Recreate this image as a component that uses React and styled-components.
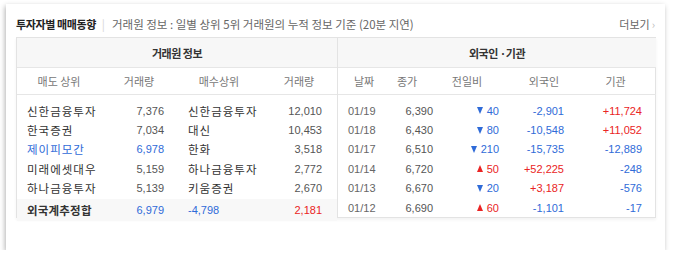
import styled, { createGlobalStyle } from "styled-components";

const GlobalStyle = createGlobalStyle`
  body {
    margin: 0;
    background: #fff;
    font-family: "Noto Sans CJK KR", "Noto Sans", sans-serif;
  }
`;

const BLUE = "#2f6bd8";
const RED = "#ea2424";
const NAME = "#333";

const Paper = styled.div`
  width: 659px;
  height: 246px;
  margin: 4px 0 0 6px;
  box-sizing: border-box;
  padding: 10px 9px 0 10px;
  background: #fff;
  box-shadow: -1px 2px 5px rgba(0, 0, 0, 0.3);
`;

const TitleBar = styled.div`
  display: flex;
  align-items: center;
  height: 20px;
  margin-bottom: 3px;
  font-size: 11.5px;
  color: #666;
`;

const Title = styled.span`
  font-weight: bold;
  color: #222;
  font-size: 11px;
  letter-spacing: -0.4px;
`;

const Sep = styled.span`
  color: #d5d5d5;
  margin: 0 7px 0 6px;
`;

const More = styled.span`
  margin-left: auto;
  margin-right: 1px;
  font-size: 11px;
  color: #666;
  &::after {
    content: "›";
    color: #bbb;
    margin-left: 2px;
  }
`;

const Table = styled.div`
  display: flex;
  border: 1px solid #e3e3e3;
  box-shadow: 0 2px 3px rgba(0, 0, 0, 0.05);
`;

const Half = styled.div`
  width: ${(p) => p.$w}px;
  border-left: ${(p) => (p.$divider ? "1px solid #e3e3e3" : "none")};
  display: grid;
  grid-template-columns: ${(p) => p.$cols};
  grid-template-rows: 30px 33px;
  grid-auto-rows: 19.4px;
  align-content: start;
  font-size: 11px;
`;

const GroupHead = styled.div`
  grid-column: 1 / -1;
  display: flex;
  align-items: center;
  justify-content: center;
  background: #f7f7f7;
  border-bottom: 1px solid #e6e6e6;
  font-weight: 600;
  color: #333;
  letter-spacing: -0.5px;
`;

const ColHead = styled.div`
  align-self: start;
  height: 26px;
  display: flex;
  align-items: center;
  justify-content: center;
  padding: 0 ${(p) => p.$pr || 0}px 0 ${(p) => p.$pl || 0}px;
  border-bottom: 1px solid #e6e6e6;
  color: #777;
`;

const Cell = styled.div`
  display: flex;
  align-items: center;
  justify-content: ${(p) => (p.$right ? "flex-end" : "flex-start")};
  padding: 0 ${(p) => p.$pr || 0}px 0 ${(p) => p.$pl || 0}px;
  color: ${(p) => p.$color || "#555"};
  font-family: ${(p) =>
    p.$num ? '"Liberation Sans", Arial, sans-serif' : '"Noto Sans CJK KR", sans-serif'};
  font-weight: ${(p) => (p.$bold ? "bold" : "normal")};
  background: ${(p) => (p.$total ? "#f8f8f8" : "transparent")};
  height: ${(p) => (p.$total ? "22px" : "auto")};
  margin-top: ${(p) => (p.$total ? "1px" : "0")};
  white-space: nowrap;
`;

const Name = styled.span`
  font-size: 11.5px;
  letter-spacing: ${(p) => (p.$tight ? "0.2px" : "1px")};
`;

const Arrow = styled.span`
  display: inline-block;
  width: 0;
  height: 0;
  margin-right: 4px;
  border-left: 3.5px solid transparent;
  border-right: 3.5px solid transparent;
  ${(p) =>
    p.$up ? `border-bottom: 7px solid ${RED};` : `border-top: 7px solid ${BLUE};`}
`;

const brokers = [
  ["신한금융투자", "7,376", "신한금융투자", "12,010"],
  ["한국증권", "7,034", "대신", "10,453"],
  ["제이피모간", "6,978", "한화", "3,518", true],
  ["미래에셋대우", "5,159", "하나금융투자", "2,772"],
  ["하나금융투자", "5,139", "키움증권", "2,670"],
];

const daily = [
  ["01/19", "6,390", false, "40", "-2,901", "+11,724"],
  ["01/18", "6,430", false, "80", "-10,548", "+11,052"],
  ["01/17", "6,510", false, "210", "-15,735", "-12,889"],
  ["01/14", "6,720", true, "50", "+52,225", "-248"],
  ["01/13", "6,670", false, "20", "+3,187", "-576"],
  ["01/12", "6,690", true, "60", "-1,101", "-17"],
];

const signColor = (v) => (v.startsWith("+") ? RED : BLUE);

export default function App() {
  return (
    <>
      <GlobalStyle />
      <Paper>
        <TitleBar>
          <Title>투자자별 매매동향</Title>
          <Sep>|</Sep>
          <span>거래원 정보 : 일별 상위 5위 거래원의 누적 정보 기준 (20분 지연)</span>
          <More>더보기</More>
        </TitleBar>
        <Table>
          <Half $w={320} $cols="80px 80px 80px 80px">
            <GroupHead>거래원 정보</GroupHead>
            <ColHead $pl={4}>매도 상위</ColHead>
            <ColHead $pl={4}>거래량</ColHead>
            <ColHead $pl={4}>매수상위</ColHead>
            <ColHead $pl={4}>거래량</ColHead>
            {brokers.map(([sell, sv, buy, bv, hl]) => [
              <Cell key={sell + "s"} $pl={10} $color={hl ? BLUE : NAME}>
                <Name>{sell}</Name>
              </Cell>,
              <Cell key={sell + "sv"} $num $right $pr={13} $color={hl ? BLUE : "#555"}>
                {sv}
              </Cell>,
              <Cell key={sell + "b"} $pl={11} $color={NAME}>
                <Name>{buy}</Name>
              </Cell>,
              <Cell key={sell + "bv"} $num $right $pr={15}>
                {bv}
              </Cell>,
            ])}
            <Cell $total $bold $pl={10} $color={NAME}>
              <Name $tight>외국계추정합</Name>
            </Cell>
            <Cell $total $num $right $pr={13} $color={BLUE}>
              6,979
            </Cell>
            <Cell $total $num $pl={11} $color={BLUE}>
              -4,798
            </Cell>
            <Cell $total $num $right $pr={15} $color={RED}>
              2,181
            </Cell>
          </Half>
          <Half $w={318} $divider $cols="52px 56px 68px 72px 70px">
            <GroupHead>외국인 ·기관</GroupHead>
            <ColHead>날짜</ColHead>
            <ColHead $pr={22}>종가</ColHead>
            <ColHead $pr={26}>전일비</ColHead>
            <ColHead $pr={12}>외국인</ColHead>
            <ColHead $pr={11}>기관</ColHead>
            {daily.map(([d, close, up, diff, fr, inst]) => [
              <Cell key={d} $num $pl={10} $color="#666">
                {d}
              </Cell>,
              <Cell key={d + "c"} $num $right $pr={13}>
                {close}
              </Cell>,
              <Cell key={d + "d"} $num $right $pr={15} $color={up ? RED : BLUE}>
                <Arrow $up={up} />
                {diff}
              </Cell>,
              <Cell key={d + "f"} $num $right $pr={22} $color={signColor(fr)}>
                {fr}
              </Cell>,
              <Cell key={d + "i"} $num $right $pr={14} $color={signColor(inst)}>
                {inst}
              </Cell>,
            ])}
          </Half>
        </Table>
      </Paper>
    </>
  );
}
